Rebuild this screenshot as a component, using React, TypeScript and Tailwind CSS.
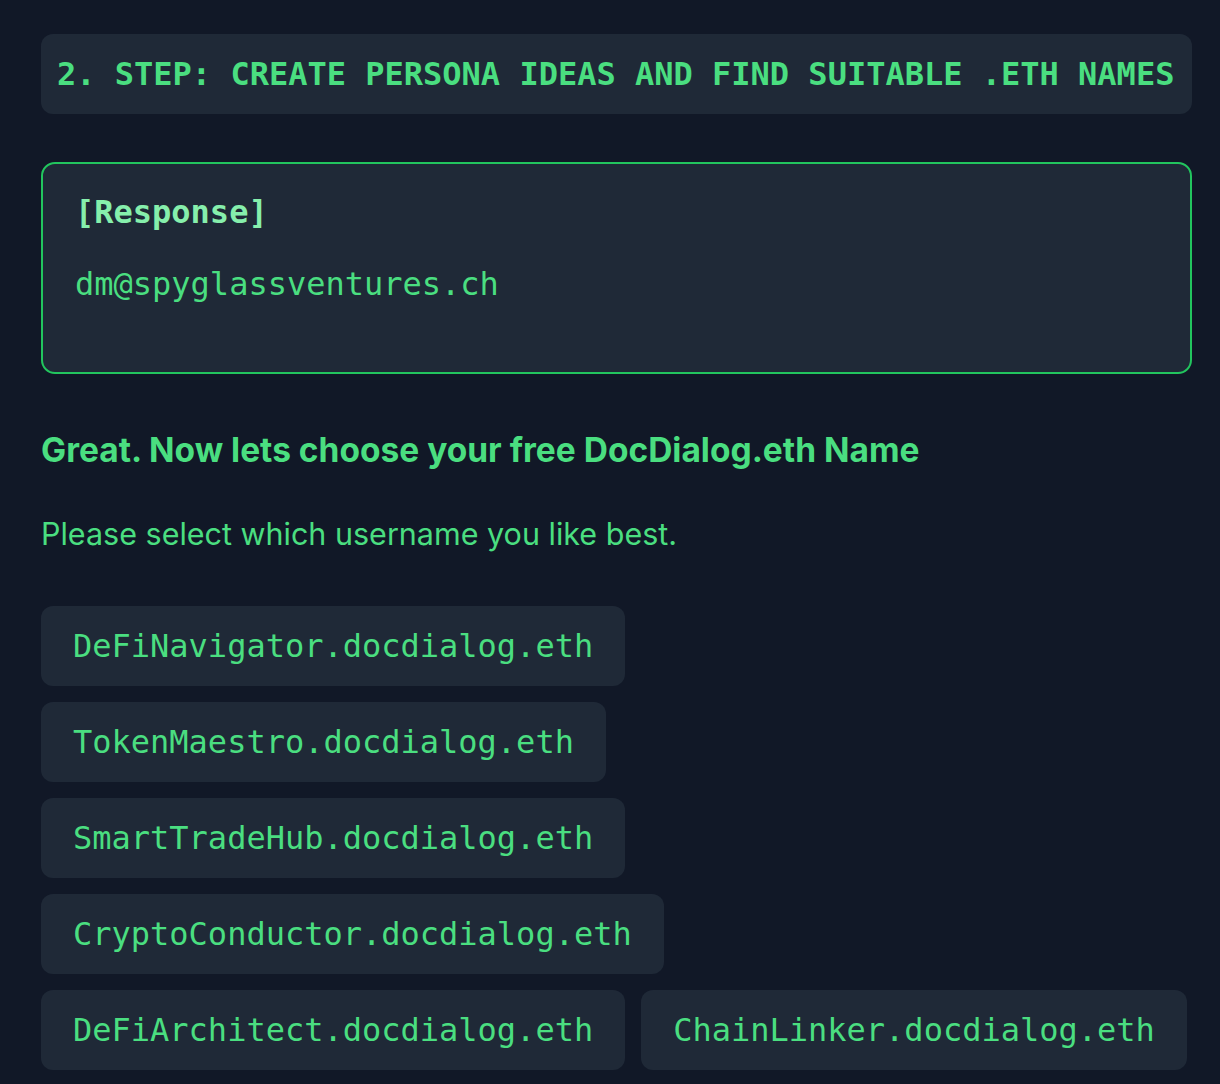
const names = [
  "DeFiNavigator.docdialog.eth",
  "TokenMaestro.docdialog.eth",
  "SmartTradeHub.docdialog.eth",
  "CryptoConductor.docdialog.eth",
  "DeFiArchitect.docdialog.eth",
  "ChainLinker.docdialog.eth",
]

const mono = "font-['DejaVu_Sans_Mono','Liberation_Mono',monospace]"

export default function App() {
  return (
    <main className="min-h-[1084px] bg-[#111827] pl-[41px] pt-[34px] font-['Inter','Liberation_Sans',sans-serif]">
      <div className="w-[1151px]">
        <div className="rounded-xl bg-[#1f2937] px-4 py-4">
          <h2 className={`${mono} text-[32px] font-bold leading-[48px] text-[#4ade80]`}>
            2. STEP: CREATE PERSONA IDEAS AND FIND SUITABLE .ETH NAMES
          </h2>
        </div>

        <div className="mt-[48px] rounded-[14px] border-2 border-[#22c55e] bg-[#1f2937] px-8 pt-6 pb-16">
          <p className={`${mono} text-[32px] font-bold leading-[48px] text-[#86efac]`}>[Response]</p>
          <p className={`${mono} mt-6 text-[32px] leading-[48px] text-[#4ade80]`}>dm@spyglassventures.ch</p>
        </div>

        <h3 className="mt-[52px] text-[33.5px] font-bold leading-[48px] text-[#4ade80]">
          Great. Now lets choose your free DocDialog.eth Name
        </h3>
        <p className="mt-[36px] text-[30.5px] leading-[48px] text-[#4ade80]">
          Please select which username you like best.
        </p>

        <div className="mt-[48px] flex flex-wrap gap-4">
          {names.map((n) => (
            <button
              key={n}
              className={`${mono} rounded-xl bg-[#1f2937] px-8 py-4 text-[32px] leading-[48px] text-[#4ade80]`}
            >
              {n}
            </button>
          ))}
        </div>
      </div>
    </main>
  )
}
